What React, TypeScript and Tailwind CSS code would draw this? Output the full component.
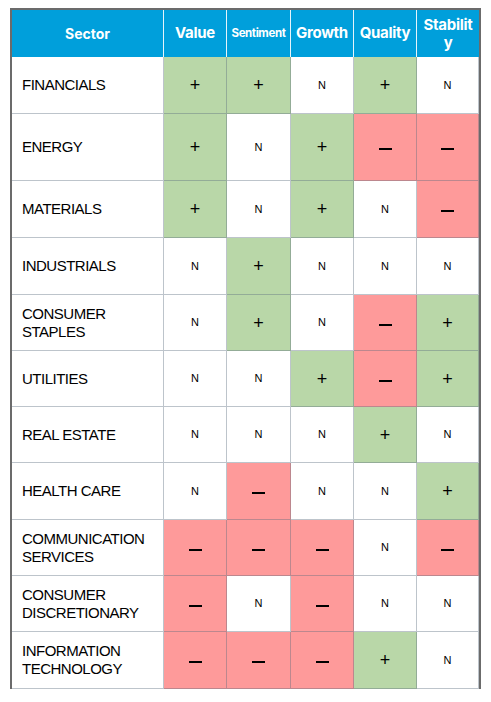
import React from "react";

type V = "+" | "-" | "N";

const rows: { name: string[]; vals: V[]; h: string }[] = [
  { name: ["FINANCIALS"], vals: ["+", "+", "N", "+", "N"], h: "h-[57px]" },
  { name: ["ENERGY"], vals: ["+", "N", "+", "-", "-"], h: "h-[67px]" },
  { name: ["MATERIALS"], vals: ["+", "N", "+", "N", "-"], h: "h-[57px]" },
  { name: ["INDUSTRIALS"], vals: ["N", "+", "N", "N", "N"], h: "h-[57px]" },
  { name: ["CONSUMER", "STAPLES"], vals: ["N", "+", "N", "-", "+"], h: "h-[56px]" },
  { name: ["UTILITIES"], vals: ["N", "N", "+", "-", "+"], h: "h-[56px]" },
  { name: ["REAL ESTATE"], vals: ["N", "N", "N", "+", "N"], h: "h-[56px]" },
  { name: ["HEALTH CARE"], vals: ["N", "-", "N", "N", "+"], h: "h-[57px]" },
  { name: ["COMMUNICATION", "SERVICES"], vals: ["-", "-", "-", "N", "-"], h: "h-[56px]" },
  { name: ["CONSUMER", "DISCRETIONARY"], vals: ["-", "N", "-", "N", "N"], h: "h-[56px]" },
  { name: ["INFORMATION", "TECHNOLOGY"], vals: ["-", "-", "-", "+", "N"], h: "h-[57px]" },
];

function Cell({ v }: { v: V }) {
  const bg = v === "+" ? "bg-[#b9d7a8]" : v === "-" ? "bg-[#fe9a9a]" : "bg-white";
  return (
    <div className={`${bg} flex items-center justify-center border-r border-b border-[#5a6b7c]/40 text-black`}>
      {v === "+" && <span className="text-[18px] leading-none font-light">+</span>}
      {v === "N" && <span className="text-[11px] leading-none">N</span>}
      {v === "-" && <span className="block w-[13px] h-[2px] bg-black mt-[4px]" />}
    </div>
  );
}

export default function App() {
  return (
    <div className="w-[491px] h-[702px] bg-white pt-[8px] pl-[10px]" style={{ fontFamily: "'Liberation Sans', Arial, sans-serif" }}>
      <div className="w-[471px] border-l-2 border-r-2 border-t-2 border-[#6b6b6b]">
        <div className="grid grid-cols-[152px_63px_64px_63px_63px_62px]">
          <div className="h-[47px] bg-[#009fdb] text-white font-bold flex items-center justify-center border-r border-[#e6f4fb] text-[14px]" style={{ fontFamily: "Inter, sans-serif" }}>Sector</div>
          <div className="h-[47px] bg-[#009fdb] text-white font-bold flex items-center justify-center border-r border-[#e6f4fb] text-[15px] tracking-[-0.3px]" style={{ fontFamily: "Inter, sans-serif" }}>Value</div>
          <div className="h-[47px] bg-[#009fdb] text-white font-bold flex items-center justify-center border-r border-[#e6f4fb] text-[11.5px] tracking-[-0.4px]" style={{ fontFamily: "Inter, sans-serif" }}>Sentiment</div>
          <div className="h-[47px] bg-[#009fdb] text-white font-bold flex items-center justify-center border-r border-[#e6f4fb] text-[15px] tracking-[-0.3px]" style={{ fontFamily: "Inter, sans-serif" }}>Growth</div>
          <div className="h-[47px] bg-[#009fdb] text-white font-bold flex items-center justify-center border-r border-[#e6f4fb] text-[15px] tracking-[-0.3px]" style={{ fontFamily: "Inter, sans-serif" }}>Quality</div>
          <div className="h-[47px] bg-[#009fdb] text-white font-bold flex items-center justify-center text-center text-[15px] leading-[18px] tracking-[-0.3px] px-[2px]" style={{ fontFamily: "Inter, sans-serif" }}>Stabilit<br />y</div>
          {rows.map((r) => (
            <React.Fragment key={r.name.join(" ")}>
              <div className={`${r.h} flex flex-col justify-center pl-[10px] border-r border-b border-[#5a6b7c]/40 text-[15px] leading-[18px] tracking-[-0.5px] text-black`}>
                {r.name.map((l) => (
                  <span key={l}>{l}</span>
                ))}
              </div>
              {r.vals.map((v, i) => (
                <Cell key={i} v={v} />
              ))}
            </React.Fragment>
          ))}
        </div>
      </div>
    </div>
  );
}
